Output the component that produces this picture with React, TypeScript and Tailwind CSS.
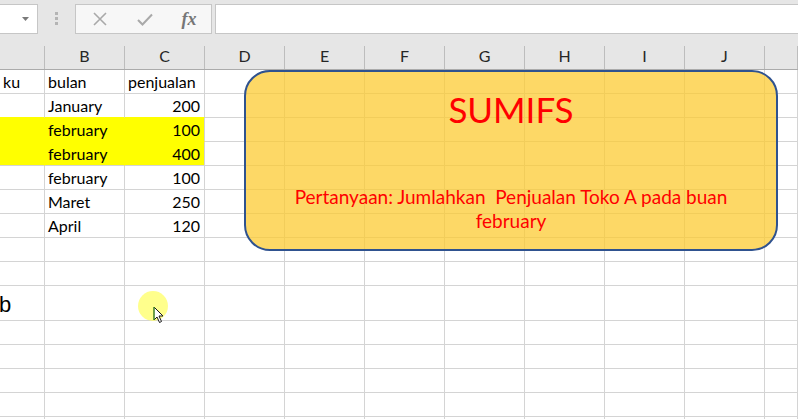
import React from "react";

type Cell = { text?: string; align?: "left" | "right"; fill?: boolean; hideR?: boolean; hideB?: boolean };

const COLS = ["A", "B", "C", "D", "E", "F", "G", "H", "I", "J", "K"];
const cellFont = { fontFamily: "Lato, 'Noto Sans', sans-serif" };

const rows: { h: string; cells: Record<number, Cell> }[] = [
  { h: "h-[24px]", cells: { 0: { text: "ku" }, 1: { text: "bulan" }, 2: { text: "penjualan" } } },
  {
    h: "h-[24px]",
    cells: {
      0: { hideB: true },
      1: { text: "January", hideB: true },
      2: { text: "200", align: "right", hideB: true },
    },
  },
  {
    h: "h-[24px]",
    cells: {
      0: { fill: true, hideR: true, hideB: true },
      1: { text: "february", fill: true, hideR: true, hideB: true },
      2: { text: "100", align: "right", fill: true, hideB: true },
    },
  },
  {
    h: "h-[24px]",
    cells: {
      0: { fill: true, hideR: true },
      1: { text: "february", fill: true, hideR: true },
      2: { text: "400", align: "right", fill: true },
    },
  },
  { h: "h-[24px]", cells: { 1: { text: "february" }, 2: { text: "100", align: "right" } } },
  { h: "h-[24px]", cells: { 1: { text: "Maret" }, 2: { text: "250", align: "right" } } },
  { h: "h-[24px]", cells: { 1: { text: "April" }, 2: { text: "120", align: "right" } } },
  { h: "h-[24px]", cells: {} },
  { h: "h-[24px]", cells: {} },
  { h: "h-[35px]", cells: {} },
  { h: "h-[24px]", cells: {} },
  { h: "h-[24px]", cells: {} },
  { h: "h-[24px]", cells: {} },
  { h: "h-[24px]", cells: {} },
  { h: "h-[24px]", cells: {} },
];

const gridCols = "grid grid-cols-[45px_80px_80px_80px_80px_80px_80px_80px_80px_80px_1fr]";

function FormulaBar() {
  return (
    <div className="flex h-[46px] items-start bg-[#e6e6e6] pt-[4px]">
      {/* name box, cut off on the left */}
      <div className="relative h-[30px] w-[38px] border-y border-r border-[#c6c6c6] bg-white">
        <svg className="absolute left-[22px] top-[12px]" width="7" height="4" viewBox="0 0 7 4">
          <path d="M0 0 H7 L3.5 4 Z" fill="#7a7a7a" />
        </svg>
      </div>
      {/* grip dots */}
      <div className="ml-[17px] mt-[8px] flex w-[3px] flex-col gap-[2px]">
        <div className="h-[3px] w-[3px] bg-[#b4b4b4]" />
        <div className="h-[3px] w-[3px] bg-[#b4b4b4]" />
        <div className="h-[3px] w-[3px] bg-[#b4b4b4]" />
      </div>
      {/* cancel / enter / insert function */}
      <div className="ml-[17px] flex h-[30px] w-[137px] items-center border border-[#c6c6c6] bg-[#f7f7f7]">
        <div className="flex w-[46px] justify-center pl-[2px]">
          <svg width="14" height="14" viewBox="0 0 14 14">
            <path d="M1 1 L13 13 M13 1 L1 13" stroke="#a9a9a9" strokeWidth="1.6" fill="none" />
          </svg>
        </div>
        <div className="flex w-[46px] justify-center">
          <svg width="16" height="13" viewBox="0 0 16 13">
            <path d="M1 7 L5.5 11.5 L15 1.5" stroke="#a9a9a9" strokeWidth="2" fill="none" />
          </svg>
        </div>
        <div
          className="flex w-[42px] justify-center text-[18px] font-bold italic text-[#767676]"
          style={{ fontFamily: "'Liberation Serif', serif" }}
        >
          fx
        </div>
      </div>
      {/* formula input */}
      <div className="ml-[3px] h-[30px] flex-1 border-y border-l border-[#c6c6c6] bg-white" />
    </div>
  );
}

function HeaderRow() {
  return (
    <div className={`${gridCols} h-[24px] border-b border-[#ababab] bg-[#e6e6e6]`}>
      {COLS.map((c, i) => (
        <div
          key={c}
          className="flex items-end justify-center border-r border-[#bdbdbd] pb-[4px] text-[16px] leading-[18px] text-[#262626]"
          style={cellFont}
        >
          {i === 0 || i === 10 ? "" : c}
        </div>
      ))}
    </div>
  );
}

function Sheet() {
  return (
    <div className="relative">
      {rows.map((r, ri) => (
        <div key={ri} className={`${gridCols} ${r.h}`}>
          {COLS.map((c, ci) => {
            const cell = r.cells[ci] || {};
            const cls = [
              "flex items-end overflow-hidden whitespace-nowrap border-b border-r pb-[2px] text-[16px] leading-[19px] text-black",
              cell.fill ? "bg-[#ffff00]" : "bg-white",
              cell.hideR ? "border-r-[#ffff00]" : "border-r-[#d4d4d4]",
              cell.hideB ? "border-b-[#ffff00]" : "border-b-[#d4d4d4]",
              cell.align === "right" ? "justify-end pr-[4px]" : "justify-start pl-[3px]",
            ].join(" ");
            return (
              <div key={c} className={cls} style={cellFont}>
                {cell.text}
                {ri === 9 && ci === 0 ? (
                  <span className="ml-[-4px] pb-[1px] text-[22px] leading-[24px]" style={{ fontFamily: "'Liberation Sans', sans-serif" }}>
                    b
                  </span>
                ) : null}
              </div>
            );
          })}
        </div>
      ))}

      {/* rounded text box shape */}
      <div
        className="absolute left-[244px] top-0 flex h-[181px] w-[534px] flex-col items-center rounded-[26px] border-2 border-[#2f528f] bg-[rgba(252,203,51,0.75)] pt-[16px] text-[#ff0000]"
        style={cellFont}
      >
        <div className="text-[35px] leading-[42px]">SUMIFS</div>
        <div className="mt-[55px] whitespace-pre-wrap text-center text-[19px] leading-[24px]">
          {"Pertanyaan: Jumlahkan  Penjualan Toko A pada buan"}
          <br />
          {"february"}
        </div>
      </div>

      {/* pointer highlight */}
      <div className="absolute left-[138px] top-[221px] h-[30px] w-[30px] rounded-full bg-[#ffff66] opacity-75" />
      <svg className="absolute left-[153px] top-[236px]" width="12" height="18" viewBox="0 0 12 18">
        <path
          d="M1 1 L1 14 L4 11 L6.5 16.5 L8.5 15.5 L6 10 L10 10 Z"
          fill="white"
          stroke="#1a1a1a"
          strokeWidth="1"
          strokeLinejoin="round"
        />
        <path d="M1 1 L1 14" stroke="#4caf2a" strokeWidth="1" />
      </svg>
    </div>
  );
}

export default function App() {
  return (
    <div className="h-[419px] w-[798px] overflow-hidden bg-white">
      <FormulaBar />
      <HeaderRow />
      <Sheet />
    </div>
  );
}
